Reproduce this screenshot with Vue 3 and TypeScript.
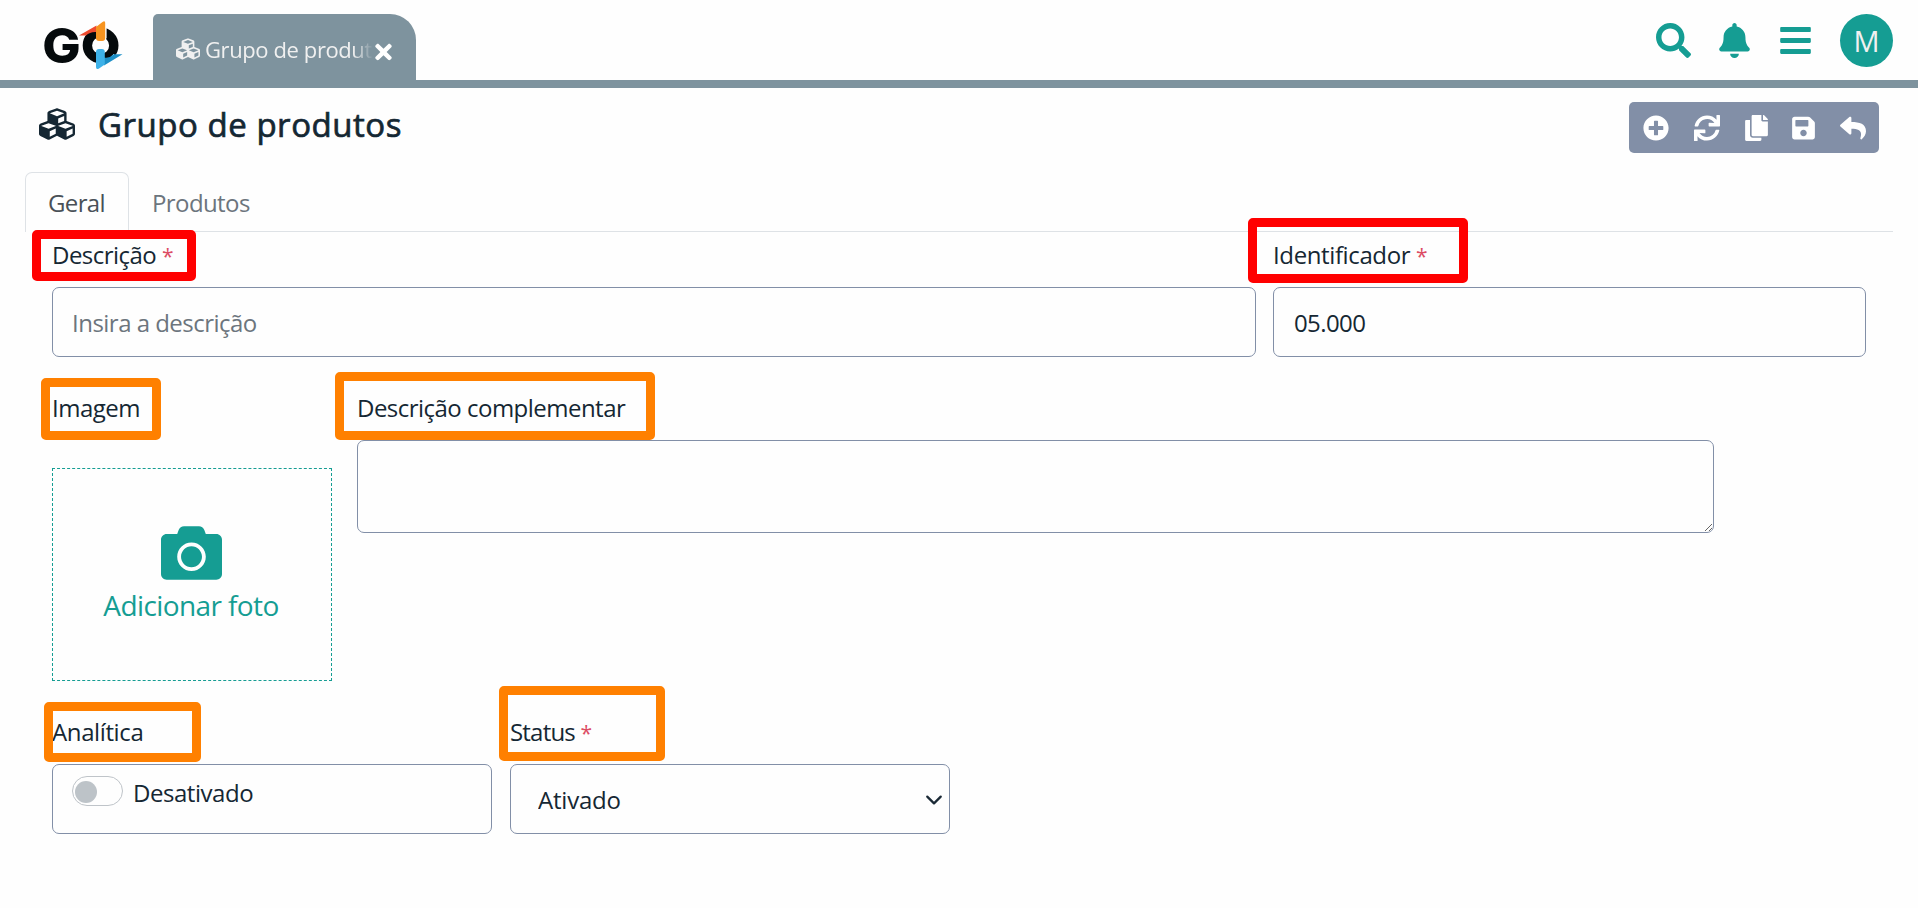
<script setup lang="ts">
import { ref } from 'vue'

interface Glyph {
  box: string
  d: string
}

const glyphs: Record<string, Glyph> = {
  cubes: {
    box: '0 0 512 512',
    d: 'M488.6 250.2L392 214V105.5c0-15-9.3-28.4-23.4-33.7l-100-37.5c-8.1-3.1-17.1-3.1-25.3 0l-100 37.5c-14.1 5.3-23.4 18.7-23.4 33.7V214l-96.6 36.2C9.3 255.5 0 268.9 0 283.9V394c0 13.6 7.7 26.1 19.9 32.2l100 50c10.1 5.1 22.1 5.1 32.2 0l103.9-52 103.9 52c10.1 5.1 22.1 5.1 32.2 0l100-50c12.2-6.1 19.9-18.6 19.9-32.2V283.9c0-15-9.3-28.4-23.4-33.7zM358 214.8l-85 31.9v-68.2l85-37v73.3zM154 104.1l102-38.2 102 38.2v.6l-102 41.4-102-41.4v-.6zm84 291.1l-85 42.5v-79.1l85-38.8v75.4zm0-112l-102 41.4-102-41.4v-.6l102-38.2 102 38.2v.6zm240 112l-85 42.5v-79.1l85-38.8v75.4zm0-112l-102 41.4-102-41.4v-.6l102-38.2 102 38.2v.6z',
  },
  times: {
    box: '0 0 352 512',
    d: 'M242.72 256l100.07-100.07c12.28-12.28 12.28-32.19 0-44.48l-22.24-22.24c-12.28-12.28-32.19-12.28-44.48 0L176 189.28 75.93 89.21c-12.28-12.28-32.19-12.28-44.48 0L9.21 111.45c-12.28 12.28-12.28 32.19 0 44.48L109.28 256 9.21 356.07c-12.28 12.28-12.28 32.19 0 44.48l22.24 22.24c12.28 12.28 32.2 12.28 44.48 0L176 322.72l100.07 100.07c12.28 12.28 32.2 12.28 44.48 0l22.24-22.24c12.28-12.28 12.28-32.19 0-44.48L242.72 256z',
  },
  search: {
    box: '0 0 512 512',
    d: 'M505 442.7L405.3 343c-4.5-4.5-10.6-7-17-7H372c27.6-35.3 44-79.7 44-128C416 93.1 322.9 0 208 0S0 93.1 0 208s93.1 208 208 208c48.3 0 92.7-16.4 128-44v16.3c0 6.4 2.5 12.5 7 17l99.7 99.7c9.4 9.4 24.6 9.4 33.9 0l28.3-28.3c9.4-9.4 9.4-24.6.1-34zM208 336c-70.7 0-128-57.2-128-128 0-70.7 57.2-128 128-128 70.7 0 128 57.2 128 128 0 70.7-57.2 128-128 128z',
  },
  bell: {
    box: '0 0 448 512',
    d: 'M224 512c35.32 0 63.97-28.65 63.97-64H160.03c0 35.35 28.65 64 63.97 64zm215.39-149.71c-19.32-20.76-55.47-51.99-55.47-154.29 0-77.7-54.48-139.9-127.94-155.16V32c0-17.67-14.32-32-31.98-32s-31.98 14.33-31.98 32v20.84C118.56 68.1 64.08 130.3 64.08 208c0 102.3-36.15 133.53-55.47 154.29-6 6.45-8.66 14.16-8.61 21.71.11 16.4 12.98 32 32.1 32h383.8c19.12 0 32-15.6 32.1-32 .05-7.55-2.61-15.27-8.61-21.71z',
  },
  bars: {
    box: '0 0 448 512',
    d: 'M16 132h416c8.837 0 16-7.163 16-16V76c0-8.837-7.163-16-16-16H16C7.163 60 0 67.163 0 76v40c0 8.837 7.163 16 16 16zm0 160h416c8.837 0 16-7.163 16-16v-40c0-8.837-7.163-16-16-16H16c-8.837 0-16 7.163-16 16v40c0 8.837 7.163 16 16 16zm0 160h416c8.837 0 16-7.163 16-16v-40c0-8.837-7.163-16-16-16H16c-8.837 0-16 7.163-16 16v40c0 8.837 7.163 16 16 16z',
  },
  camera: {
    box: '0 32 512 448',
    d: 'M512 144v288c0 26.5-21.5 48-48 48H48c-26.5 0-48-21.5-48-48V144c0-26.5 21.5-48 48-48h88l12.3-32.9c7-18.7 24.9-31.1 44.9-31.1h125.5c20 0 37.9 12.4 44.9 31.1L376 96h88c26.5 0 48 21.5 48 48zM376 288c0-66.2-53.8-120-120-120s-120 53.8-120 120 53.8 120 120 120 120-53.8 120-120zm-32 0c0 48.5-39.5 88-88 88s-88-39.5-88-88 39.5-88 88-88 88 39.5 88 88z',
  },
}

const actions: (Glyph & { name: string; narrow: boolean })[] = [
  {
    name: 'Novo',
    narrow: false,
    box: '0 0 512 512',
    d: 'M256 8C119 8 8 119 8 256s111 248 248 248 248-111 248-248S393 8 256 8zm144 276c0 6.6-5.4 12-12 12h-92v92c0 6.6-5.4 12-12 12h-56c-6.6 0-12-5.4-12-12v-92h-92c-6.6 0-12-5.4-12-12v-56c0-6.6 5.4-12 12-12h92v-92c0-6.6 5.4-12 12-12h56c6.6 0 12 5.4 12 12v92h92c6.6 0 12 5.4 12 12v56z',
  },
  {
    name: 'Atualizar',
    narrow: false,
    box: '0 0 512 512',
    d: 'M440.65 12.57l4 82.77A247.16 247.16 0 0 0 255.83 8C134.73 8 33.91 94.92 12.29 209.82A12 12 0 0 0 24.09 224h49.05a12 12 0 0 0 11.67-9.26 175.91 175.91 0 0 1 317-56.94l-101.46-4.86a12 12 0 0 0-12.57 12v47.41a12 12 0 0 0 12 12H500a12 12 0 0 0 12-12V12a12 12 0 0 0-12-12h-47.37a12 12 0 0 0-11.98 12.57zM255.83 432a175.61 175.61 0 0 1-146-77.8l101.8 4.87a12 12 0 0 0 12.57-12v-47.4a12 12 0 0 0-12-12H12a12 12 0 0 0-12 12V500a12 12 0 0 0 12 12h47.35a12 12 0 0 0 12-12.6l-4.15-82.57A247.17 247.17 0 0 0 255.83 504c121.11 0 221.93-86.92 243.55-201.82a12 12 0 0 0-11.8-14.18h-49.05a12 12 0 0 0-11.67 9.26A175.86 175.86 0 0 1 255.83 432z',
  },
  {
    name: 'Copiar',
    narrow: true,
    box: '0 0 448 512',
    d: 'M320 448v40c0 13.255-10.745 24-24 24H24c-13.255 0-24-10.745-24-24V120c0-13.255 10.745-24 24-24h72v296c0 30.879 25.121 56 56 56h168zm0-344V0H152c-13.255 0-24 10.745-24 24v368c0 13.255 10.745 24 24 24h272c13.255 0 24-10.745 24-24V128H344c-13.2 0-24-10.8-24-24zm120.971-31.029L375.029 7.029A24 24 0 0 0 358.059 0H352v96h96v-6.059a24 24 0 0 0-7.029-16.97z',
  },
  {
    name: 'Salvar',
    narrow: true,
    box: '0 0 448 512',
    d: 'M433.941 129.941l-83.882-83.882A48 48 0 0 0 316.118 32H48C21.49 32 0 53.49 0 80v352c0 26.51 21.49 48 48 48h352c26.51 0 48-21.49 48-48V163.882a48 48 0 0 0-14.059-33.941zM224 416c-35.346 0-64-28.654-64-64 0-35.346 28.654-64 64-64s64 28.654 64 64c0 35.346-28.654 64-64 64zm96-304.52V212c0 6.627-5.373 12-12 12H76c-6.627 0-12-5.373-12-12V108c0-6.627 5.373-12 12-12h228.52c3.183 0 6.235 1.264 8.485 3.515l3.48 3.48A11.996 11.996 0 0 1 320 111.48z',
  },
  {
    name: 'Voltar',
    narrow: false,
    box: '0 0 512 512',
    d: 'M8.309 189.836L184.313 37.851C199.719 24.546 224 35.347 224 56.015v80.053c160.629 1.839 288 34.032 288 186.258 0 61.441-39.581 122.309-83.333 154.132-13.653 9.931-33.111-2.533-28.077-18.631 45.344-145.012-21.507-183.51-176.59-185.742V360c0 20.7-24.3 31.453-39.687 18.164l-176.004-152c-11.071-9.562-11.086-26.753 0-36.328z',
  },
]

const descricao = ref('')
const identificador = ref('05.000')
const complemento = ref('')
const analitica = ref(false)
const status = ref('Ativado')
</script>

<template>
  <div class="page">
    <header class="topbar">
      <svg class="logo" viewBox="0 0 84 54" aria-label="GO">
        <text class="logo-letter" x="0.2" y="45" textLength="38.5" lengthAdjust="spacingAndGlyphs">G</text>
        <circle cx="58.6" cy="27.4" r="13.2" fill="none" stroke="#050a0c" stroke-width="9.4" />
        <path d="M62 8H64.6V20L62 24z" fill="#fff" />
        <path d="M54 52V50L62 46L72 36" fill="none" stroke="#fff" stroke-width="1" />
        <path d="M37 17.6L54.5 7.5V14Q48 13.5 44 17.6z" fill="#ef4b2f" />
        <path d="M54 9L60.5 4Q63.2 2.2 63.2 5V20Q63.2 23 60.2 23H57Q54 23 54 20z" fill="#f7941f" />
        <path d="M62 39.5Q67 41 71.5 36.3H80.5L62 47.5z" fill="#1d8fc6" />
        <path d="M54 34Q54 31 57 31H59.8Q62.8 31 62.8 34V46.5L57 50.5Q54 52 54 49z" fill="#3db1e8" />
      </svg>
      <div class="app-tab">
        <svg class="app-tab-icon" :viewBox="glyphs.cubes.box"><path :d="glyphs.cubes.d" /></svg>
        <span class="app-tab-text">Grupo de produtos</span>
        <svg class="app-tab-close" :viewBox="glyphs.times.box"><path :d="glyphs.times.d" /></svg>
      </div>
      <nav class="shortcuts">
        <svg class="ico-search" :viewBox="glyphs.search.box"><path :d="glyphs.search.d" /></svg>
        <svg class="ico-bell" :viewBox="glyphs.bell.box"><path :d="glyphs.bell.d" /></svg>
        <svg class="ico-bars" :viewBox="glyphs.bars.box"><path :d="glyphs.bars.d" /></svg>
        <span class="avatar">M</span>
      </nav>
    </header>

    <section class="title-row">
      <svg class="title-icon" :viewBox="glyphs.cubes.box"><path :d="glyphs.cubes.d" /></svg>
      <h1>Grupo de produtos</h1>
      <div class="toolbar">
        <svg
          v-for="a in actions"
          :key="a.name"
          :class="{ narrow: a.narrow }"
          :viewBox="a.box"
          :aria-label="a.name"
        >
          <path :d="a.d" />
        </svg>
      </div>
    </section>

    <div class="tabs">
      <span class="tab active">Geral</span>
      <span class="tab">Produtos</span>
    </div>

    <main class="form">
      <div class="row">
        <div class="field grow">
          <label>Descrição <b>*</b><i class="mark red m-desc"></i></label>
          <input v-model="descricao" class="control" placeholder="Insira a descrição" />
        </div>
        <div class="field w-ident">
          <label class="looser">Identificador <b>*</b><i class="mark red m-ident"></i></label>
          <input v-model="identificador" class="control code" />
        </div>
      </div>

      <div class="row photo-row">
        <div class="field w-photo">
          <label>Imagem<i class="mark m-img"></i></label>
          <div class="photo">
            <svg :viewBox="glyphs.camera.box"><path :d="glyphs.camera.d" /></svg>
            <span>Adicionar foto</span>
          </div>
        </div>
        <div class="field w-comp">
          <label>Descrição complementar<i class="mark m-comp"></i></label>
          <textarea v-model="complemento"></textarea>
        </div>
      </div>

      <div class="row last-row">
        <div class="field w-small">
          <label class="looser">Analítica<i class="mark m-ana"></i></label>
          <div class="control switch-box" @click="analitica = !analitica">
            <span class="switch" :class="{ on: analitica }"></span>
            <span class="switch-text">{{ analitica ? 'Ativado' : 'Desativado' }}</span>
          </div>
        </div>
        <div class="field w-small">
          <label class="tighter">Status <b>*</b><i class="mark m-sta"></i></label>
          <div class="select-wrap">
            <select v-model="status" class="control">
              <option>Ativado</option>
              <option>Desativado</option>
            </select>
            <svg class="chevron" viewBox="0 0 16 16">
              <path d="M2 5l6 6 6-6" fill="none" stroke="#1b2a36" stroke-width="2" stroke-linecap="round" stroke-linejoin="round" />
            </svg>
          </div>
        </div>
      </div>
    </main>
  </div>
</template>

<style>
body {
  margin: 0;
  background: #fefefe;
}
</style>

<style scoped>
.page,
.page * {
  box-sizing: border-box;
}
.page {
  height: 908px;
  overflow: hidden;
  font-family: 'Segoe UI', 'Open Sans', 'Noto Sans', sans-serif;
  font-size: 24px;
  letter-spacing: -0.52px;
  color: #152733;
}
svg {
  display: block;
  flex: none;
  fill: currentColor;
}
.topbar {
  height: 88px;
  display: flex;
  align-items: flex-start;
  border-bottom: 8px solid #7e939e;
  background: #fefefe;
}
.logo {
  width: 84px;
  height: 54px;
  margin: 18px 27px 0 42px;
  overflow: visible;
}
.logo-letter {
  font: 800 48.5px Inter, 'Liberation Sans', sans-serif;
  letter-spacing: 0;
  fill: #050a0c;
}
.app-tab {
  width: 263px;
  height: 66px;
  margin-top: 14px;
  padding: 0 24px 0 23px;
  display: flex;
  align-items: flex-start;
  border-radius: 5px 26px 0 0;
  background: #7e939e;
  color: #f0f0f0;
}
.app-tab-icon {
  width: 24px;
  height: 24px;
  margin: 23px 5px 0 0;
}
.app-tab-text {
  width: 168px;
  overflow: hidden;
  white-space: nowrap;
  font-size: 22px;
  letter-spacing: -0.4px;
  line-height: 36px;
  margin-top: 17px;
  mask-image: linear-gradient(90deg, #000 88%, transparent 100%);
}
.app-tab-close {
  width: 17px;
  height: 24px;
  margin: 26px 0 0 2px;
  color: #fff;
}
.shortcuts {
  margin-left: auto;
  padding: 14px 25px 0 0;
  display: flex;
  align-items: flex-start;
  color: #159d93;
}
.shortcuts svg {
  height: 35px;
  margin-top: 9px;
}
.ico-search {
  width: 35px;
  margin-right: 28px;
}
.ico-bell {
  width: 31px;
  margin-right: 30px;
}
.ico-bars {
  width: 31px;
  margin-right: 29px;
}
.avatar {
  width: 53px;
  height: 53px;
  border-radius: 50%;
  background: #159d93;
  color: #f0f0f0;
  font-size: 29px;
  letter-spacing: 0;
  line-height: 54px;
  text-align: center;
}
.title-row {
  height: 84px;
  display: flex;
  align-items: flex-start;
  padding: 14px 39px 0 39px;
}
.title-icon {
  width: 36px;
  height: 36px;
  margin: 4px 23px 0 0;
}
h1 {
  margin: 0;
  font-size: 33px;
  letter-spacing: 0.53px;
  line-height: 46px;
  font-weight: 500;
  -webkit-text-stroke: 0.7px currentColor;
}
.toolbar {
  width: 250px;
  height: 51px;
  margin-left: auto;
  padding: 0 13px 0 14px;
  display: flex;
  align-items: center;
  justify-content: space-between;
  border-radius: 5px;
  background: #828fa7;
  color: #fff;
}
.toolbar svg {
  width: 26px;
  height: 26px;
}
.toolbar svg.narrow {
  width: 23px;
}
.tabs {
  height: 60px;
  margin: 0 25px;
  display: flex;
  border-bottom: 1px solid #dee2e6;
}
.tab {
  height: 60px;
  padding: 0 23px;
  line-height: 61px;
  letter-spacing: -0.6px;
  color: #6c757d;
}
.tab.active {
  width: 104px;
  padding-left: 22px;
  border: 1px solid #dee2e6;
  border-bottom: 0;
  border-radius: 7px 7px 0 0;
  background: #fefefe;
  line-height: 60px;
  letter-spacing: -0.65px;
  color: #495057;
}
.form {
  padding: 5px 52px 0;
  display: flex;
  flex-direction: column;
  gap: 33px;
}
.row {
  display: flex;
  gap: 17px;
}
.photo-row {
  gap: 25px;
}
.last-row {
  gap: 18px;
}
.field {
  display: flex;
  flex-direction: column;
}
.grow {
  flex: 1;
}
.w-ident {
  width: 593px;
}
.w-photo {
  width: 280px;
}
.w-comp {
  width: 1357px;
}
.w-small {
  width: 440px;
}
label {
  position: relative;
  height: 36px;
  margin-bottom: 14px;
  line-height: 36px;
  white-space: nowrap;
}
label.looser {
  letter-spacing: -0.38px;
}
label.tighter {
  letter-spacing: -0.8px;
}
label b {
  font-size: 21px;
  font-weight: 400;
  color: #dc4c64;
}
.control,
textarea {
  width: 100%;
  height: 70px;
  margin: 0;
  padding: 0 19px;
  border: 1px solid #828fa7;
  border-radius: 7px;
  background: transparent;
  outline: none;
  color: inherit;
  font: inherit;
  letter-spacing: inherit;
}
textarea {
  display: block;
  height: 93px;
}
input::placeholder {
  color: #6c757d;
  opacity: 1;
}
.control.code {
  padding-left: 20px;
  letter-spacing: -0.6px;
}
.photo {
  height: 213px;
  margin-top: 28px;
  padding: 57px 2px 0 0;
  display: flex;
  flex-direction: column;
  align-items: center;
  border: 1px dashed #159d93;
  color: #159d93;
  font-size: 28px;
  line-height: 40px;
  letter-spacing: -0.6px;
}
.photo svg {
  width: 61px;
  height: 54px;
  margin-bottom: 5px;
}
.switch-box {
  display: flex;
  align-items: flex-start;
  padding-top: 11px;
}
.switch {
  width: 51px;
  height: 30px;
  padding: 4px 2px;
  margin-right: 10px;
  border: 1px solid #bfc4c9;
  border-radius: 15px;
}
.switch::before {
  content: '';
  display: block;
  width: 22px;
  height: 22px;
  border-radius: 50%;
  background: #bdc3c8;
}
.switch.on::before {
  margin-left: auto;
  background: #159d93;
}
.switch-text {
  line-height: 34px;
  letter-spacing: -0.45px;
}
.select-wrap {
  position: relative;
}
select {
  appearance: none;
}
select.control {
  padding-left: 27px;
  letter-spacing: -0.2px;
}
.chevron {
  position: absolute;
  right: 7px;
  top: 27px;
  width: 18px;
  height: 18px;
}
.mark {
  position: absolute;
  border: 9px solid #ff8000;
  border-radius: 5px;
}
.mark.red {
  border-color: #f00;
}
.m-desc {
  left: -20px;
  top: -7px;
  width: 164px;
  height: 51px;
}
.m-ident {
  left: -25px;
  top: -19px;
  width: 220px;
  height: 65px;
}
.m-img {
  left: -11px;
  top: -12px;
  width: 120px;
  height: 62px;
}
.m-comp {
  left: -22px;
  top: -18px;
  width: 320px;
  height: 68px;
}
.m-ana {
  left: -8px;
  top: -12px;
  width: 157px;
  height: 60px;
}
.m-sta {
  left: -11px;
  top: -28px;
  width: 166px;
  height: 75px;
}
</style>
